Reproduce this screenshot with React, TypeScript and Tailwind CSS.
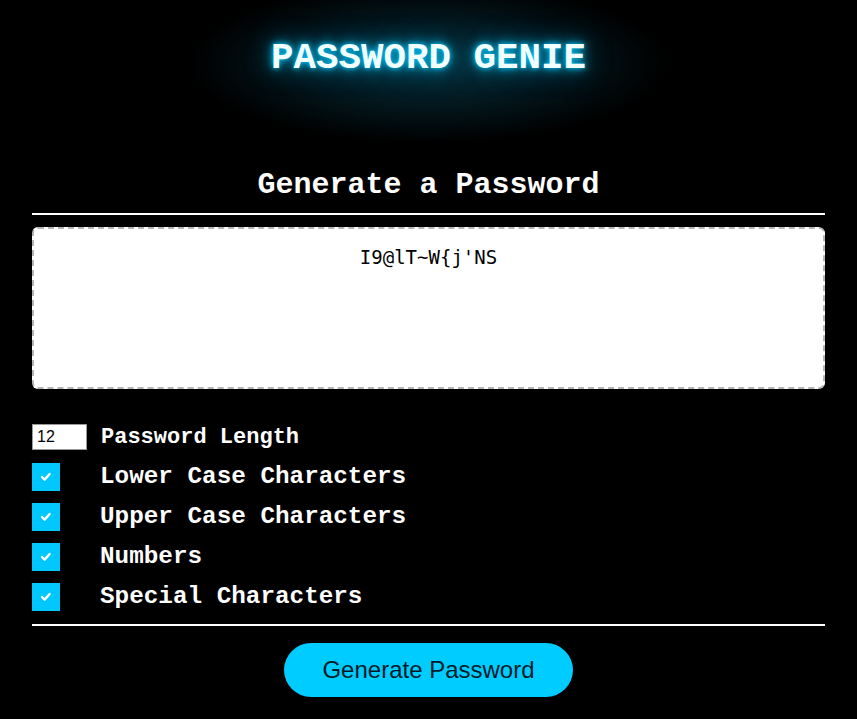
import { useState } from "react";

const options = [
  "Lower Case Characters",
  "Upper Case Characters",
  "Numbers",
  "Special Characters",
];

function Check() {
  return (
    <span className="w-[28px] h-[28px] bg-[#00c8ff] flex items-center justify-center shrink-0">
      <svg width="14" height="14" viewBox="0 0 14 14">
        <path d="M3 7 L5.6 9.6 L10.6 4" fill="none" stroke="#ffffff" strokeWidth="2.4" strokeLinecap="round" strokeLinejoin="round" />
      </svg>
    </span>
  );
}

export default function App() {
  const [length, setLength] = useState("12");

  return (
    <div className="min-h-[719px] bg-black text-white font-['Liberation_Mono','Courier_New',monospace]">
      <header className="h-[140px] flex items-center justify-center pb-[24px] bg-[radial-gradient(ellipse_240px_80px_at_50%_45%,#06303d_0%,#03161c_55%,#000000_100%)]">
        <h1 className="text-[37.5px] font-bold text-[#f2ffff] [text-shadow:0_0_5px_#00c8ff,0_0_12px_#00b4e6,0_0_28px_#0a7fa0]">
          PASSWORD GENIE
        </h1>
      </header>

      <main className="mx-[32px] pt-[27px]">
        <h2 className="text-center text-[30px] font-bold leading-[36px]">Generate a Password</h2>
        <div className="mt-[10px] h-[2px] bg-white" />

        <div className="mt-[12px] h-[162px] bg-white rounded-[6px] border-2 border-dashed border-[#b5b5b5] pt-[14px] text-center text-[19px] text-black font-['DejaVu_Sans_Mono',monospace]">
          I9@lT~W{"{"}j'NS
        </div>

        <div className="mt-[35px] flex items-center gap-[14px] h-[26px]">
          <input
            value={length}
            onChange={(e) => setLength(e.target.value)}
            className="w-[55px] h-[26px] bg-white border border-[#999] px-[4px] text-[16px] text-black font-['Liberation_Sans',Arial,sans-serif] outline-none"
          />
          <span className="text-[22px] font-bold">Password Length</span>
        </div>

        <ul className="mt-[13px] flex flex-col gap-[12px]">
          {options.map((o) => (
            <li key={o} className="flex items-center gap-[40px] h-[28px]">
              <Check />
              <span className="text-[24.3px] font-bold">{o}</span>
            </li>
          ))}
        </ul>

        <div className="mt-[13px] h-[2px] bg-white" />

        <div className="flex justify-center mt-[17px]">
          <button className="w-[289px] h-[54px] rounded-full bg-[#00ccff] text-[#001a2a] text-[24px] font-['Liberation_Sans',Arial,sans-serif]">
            Generate Password
          </button>
        </div>
      </main>
    </div>
  );
}
